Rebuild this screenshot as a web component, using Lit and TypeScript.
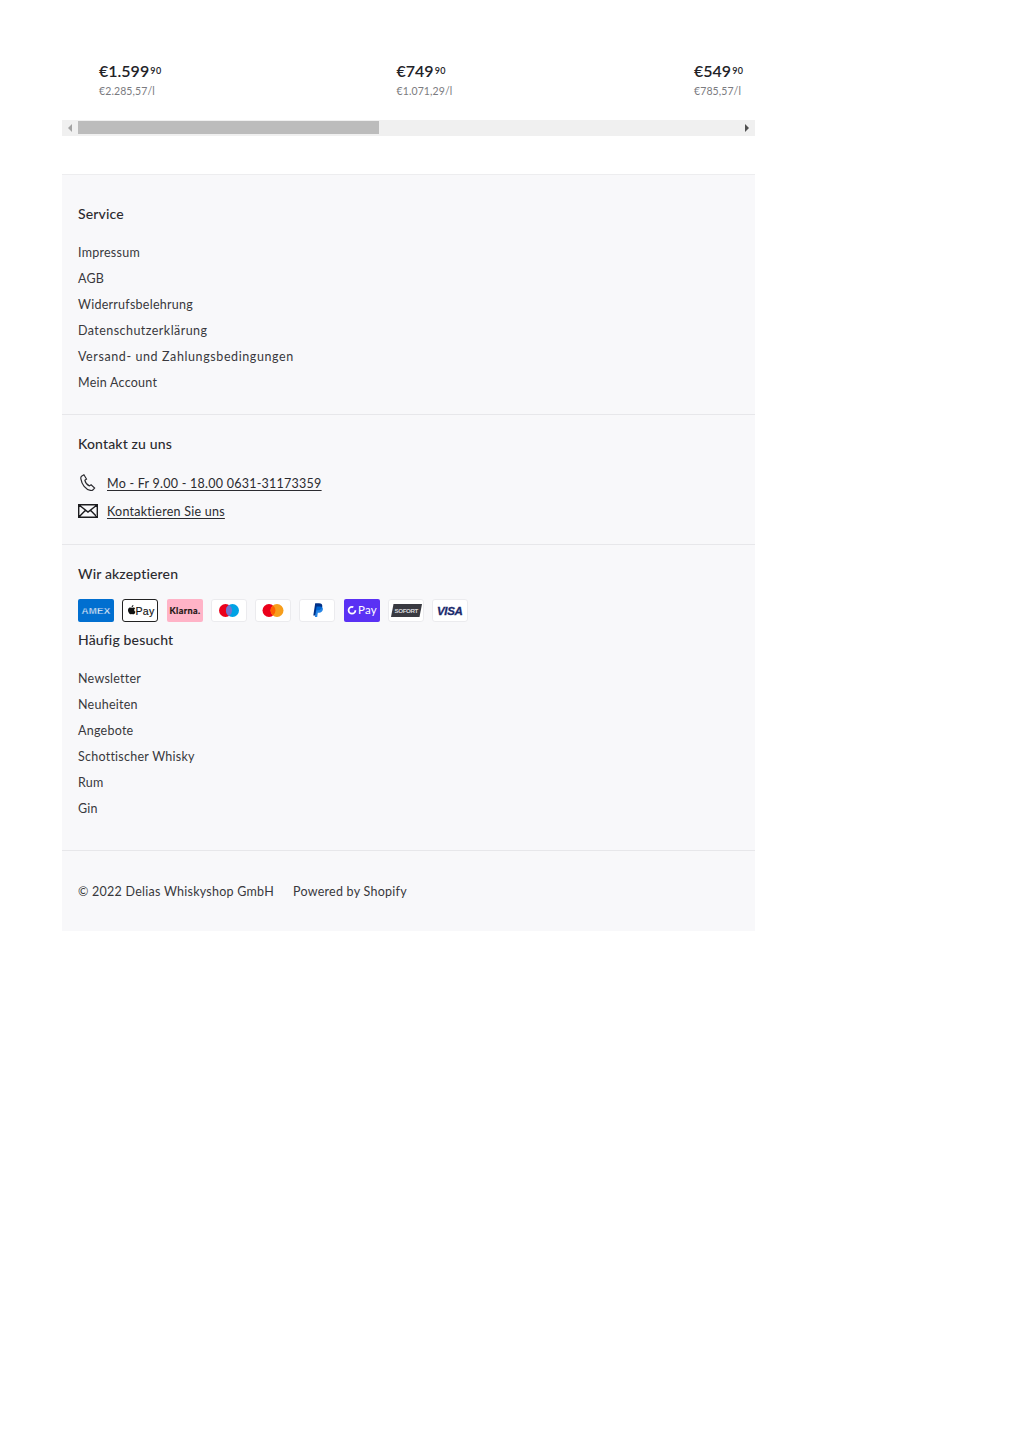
import { LitElement, html, css, svg } from "lit";
import { customElement } from "lit/decorators.js";

const products = [
  { euro: "€1.599", cents: "90", unit: "€2.285,57/l" },
  { euro: "€749", cents: "90", unit: "€1.071,29/l" },
  { euro: "€549", cents: "90", unit: "€785,57/l" },
];
const serviceLinks = [
  { label: "Impressum" },
  { label: "AGB" },
  { label: "Widerrufsbelehrung" },
  { label: "Datenschutzerklärung", spacing: 0.45 },
  { label: "Versand- und Zahlungsbedingungen", spacing: 0.6 },
  { label: "Mein Account" },
];
const visitedLinks = [
  { label: "Newsletter" },
  { label: "Neuheiten" },
  { label: "Angebote" },
  { label: "Schottischer Whisky" },
  { label: "Rum" },
  { label: "Gin" },
];

const cardBorder = svg`<rect x=".5" y=".5" width="35" height="22" rx="2.5" fill="#fff" stroke="#ebebee"/>`;

const payIcons = [
  svg`<rect width="36" height="23" rx="2" fill="#016fd0"/><text x="18" y="14.7" text-anchor="middle" font-family="Liberation Sans" font-size="9" font-weight="700" fill="#fff" stroke="#016fd0" stroke-width=".35" textLength="29" lengthAdjust="spacingAndGlyphs">AMEX</text>`,
  svg`<rect x=".5" y=".5" width="35" height="22" rx="2.5" fill="#fff" stroke="#222"/><g transform="translate(3.8 4.9) scale(.74)" fill="#111"><path d="M9.6 3.6c.5-.6.8-1.300.7-2-.7 0-1.400.4-1.800.9-.4.500-.8 1.200-.7 1.900.7.100 1.400-.3 1.800-.8zm.7 1.100c-1 0-1.800.6-2.300.6s-1.200-.6-2-.6c-1 0-2 .6-2.500 1.500-1.100 1.900-.3 4.700.8 6.200.5.800 1.100 1.600 2 1.600.8 0 1.100-.5 2-.5s1.200.5 2 .5 1.400-.8 1.900-1.500c.6-.9.800-1.700.9-1.800-1-.4-1.700-1.400-1.700-2.500 0-1 .6-1.900 1.400-2.300-.5-.8-1.400-1.200-2.500-1.200z"/></g><text x="13.500" y="15.600" font-family="Liberation Sans" font-size="11.200" fill="#111" stroke="#111" stroke-width=".15" textLength="19" lengthAdjust="spacingAndGlyphs">Pay</text>`,
  svg`<rect width="36" height="23" rx="2" fill="#ffb3c7"/><text x="18" y="14.600" text-anchor="middle" font-family="Lato" font-size="9" font-weight="700" fill="#17120f" stroke="#17120f" stroke-width=".2" textLength="31">Klarna.</text>`,
  svg`${cardBorder}<circle cx="14.500" cy="11.500" r="6.500" fill="#eb001b"/><circle cx="21.500" cy="11.500" r="6.500" fill="#00a2e5"/><path d="M18 6a6.500 6.500 0 0 1 0 11 6.500 6.500 0 0 1 0-11z" fill="#7375cf"/>`,
  svg`${cardBorder}<circle cx="14" cy="11.500" r="6.500" fill="#eb001b"/><circle cx="22" cy="11.500" r="6.500" fill="#f79e1b"/><path d="M18 6.400a6.500 6.500 0 0 1 0 10.200 6.500 6.500 0 0 1 0-10.200z" fill="#ff5f00"/>`,
  svg`${cardBorder}<path d="M14.300 16.500l1.900-12.300h3.800c2.300 0 3.600 1.200 3.300 3.300-.4 2.500-2.100 3.700-4.400 3.700h-1.500l-.8 5.300z" fill="#003087"/><path d="M15.900 18l1.700-10.500h3.300c2.200 0 3.300 1 3 3-.3 2-1.800 3.200-3.800 3.200h-1.300l-.6 4.300z" fill="#0070e0" opacity=".85"/>`,
  svg`<rect width="36" height="23" rx="2" fill="#5a31f4"/><circle cx="8" cy="11.300" r="3.400" fill="none" stroke="#fff" stroke-width="1.800" stroke-dasharray="17 4"/><text x="14" y="15.400" font-family="Lato" font-size="11.500" font-weight="400" fill="#fff">Pay</text>`,
  svg`${cardBorder}<path d="M5.500 5h28.500l-2.500 13h-28.500z" fill="#393a41"/><text x="18.500" y="13.700" text-anchor="middle" font-family="Liberation Sans" font-size="6.200" font-weight="700" fill="#d6d6da" textLength="24">SOFORT</text>`,
  svg`${cardBorder}<text x="18" y="15.700" text-anchor="middle" font-family="Liberation Sans" font-size="11.500" font-weight="700" font-style="italic" fill="#1a2a6c" stroke="#1a2a6c" stroke-width=".3" textLength="26">VISA</text>`,
];

@customElement("app-root")
export class AppRoot extends LitElement {
  static styles = css`
    :host { display: block; height: 1449px; background: #fff; font-family: "Lato", sans-serif; color: #2b2b30; }
    .wrap { width: 693px; margin-left: 62px; padding-top: 61.6px; }
    .products { display: grid; grid-template-columns: repeat(3, 297.5px); height: 58px; overflow: hidden; }
    .product { padding-left: 37px; }
    .price { font-size: 16px; font-weight: 600; line-height: 18px; letter-spacing: 0; color: #222227; white-space: nowrap; }
    .price sup { font-size: 9px; line-height: 0; letter-spacing: .5px; vertical-align: 3px; margin-left: 1px; }
    .unit { font-size: 10.5px; line-height: 14px; margin-top: 4px; letter-spacing: .1px; color: #7b7b80; }
    .scrollbar { display: flex; align-items: center; height: 16.4px; background: #f0f0f0; }
    .arrow { width: 16px; height: 16px; display: flex; align-items: center; justify-content: center; flex: none; }
    .thumb { width: 301px; height: 13px; background: #bcbcbc; }
    .spacer { flex: 1; }
    footer { margin-top: 38px; background: #f8f8fa; border-top: 1px solid #ededef; font-size: 12.5px; letter-spacing: .25px; color: #38383d; }
    section { padding: 0 16px; }
    section + section { border-top: 1px solid #e7e7ea; }
    h3 { margin: 0; font-size: 14px; line-height: 20px; font-weight: 500; letter-spacing: .15px; color: #2b2b30; }
    .service { padding-top: 29px; height: 239px; box-sizing: border-box; }
    .links { list-style: none; margin: 16px 0 0; padding: 0; }
    .links li { height: 26px; line-height: 26px; }
    .contact { padding-top: 19px; height: 130px; box-sizing: border-box; }
    .contact-rows { margin-top: 15px; }
    .contact-row { display: flex; align-items: center; height: 28px; }
    .contact-icon { width: 20px; height: 20px; margin-right: 9px; flex: none; }
    .contact-row a { padding-top: 2px; color: #2b2b30; text-decoration: underline; text-underline-offset: 2px; }
    .accept { padding-top: 19px; height: 306px; box-sizing: border-box; }
    .pay { display: flex; gap: 8.3px; margin-top: 15px; }
    .pay svg { width: 36px; height: 23px; display: block; flex: none; }
    .visited { margin-top: 8px; }
    .legal { display: flex; gap: 19px; align-items: center; height: 81px; padding-top: 1px; box-sizing: border-box; }
  `;

  private link(l: { label: string; spacing?: number }) {
    return html`<li style=${l.spacing ? `letter-spacing:${l.spacing}px` : ""}>${l.label}</li>`;
  }

  render() {
    return html`
      <div class="wrap">
        <div class="products">
          ${products.map((p) => html`
            <div class="product">
              <div class="price">${p.euro}<sup>${p.cents}</sup></div>
              <div class="unit">${p.unit}</div>
            </div>`)}
        </div>
        <div class="scrollbar">
          <div class="arrow"><svg width="6" height="8" viewBox="0 0 6 8"><path d="M5 0v8L1 4z" fill="#a3a3a3"/></svg></div>
          <div class="thumb"></div>
          <div class="spacer"></div>
          <div class="arrow"><svg width="6" height="8" viewBox="0 0 6 8"><path d="M1 0v8l4-4z" fill="#505050"/></svg></div>
        </div>
        <footer>
          <section class="service">
            <h3>Service</h3>
            <ul class="links">${serviceLinks.map((l) => this.link(l))}</ul>
          </section>
          <section class="contact">
            <h3>Kontakt zu uns</h3>
            <div class="contact-rows">
              <div class="contact-row">
                <svg class="contact-icon" viewBox="0 0 20 20" fill="none" stroke="#2b2b30" stroke-width="1.2"><path d="M3.500 3.200l2.400-1.400 2.600 4.200-1.600 1.300c.5 2.500 2.300 4.600 4.500 5.600l1.700-1.200 3.500 3.300-1.800 2c-.6.500-1.500.6-2.400.3C7.500 16.500 3.800 11.500 2.800 5.600c-.100-1 .100-1.900.7-2.400z"/></svg>
                <a>Mo - Fr 9.00 - 18.00 0631-31173359</a>
              </div>
              <div class="contact-row">
                <svg class="contact-icon" viewBox="0 0 20 20" fill="none" stroke="#1c1c1f" stroke-width="1.4"><path d="M.7 3.700h18.600v12.600H.7zM.7 3.700L10 11l9.300-7.300M.7 16.300L7.500 9.300M19.300 16.300l-6.800-7"/></svg>
                <a>Kontaktieren Sie uns</a>
              </div>
            </div>
          </section>
          <section class="accept">
            <h3>Wir akzeptieren</h3>
            <div class="pay">
              ${payIcons.map((icon) => html`<svg viewBox="0 0 36 23">${icon}</svg>`)}
            </div>
            <div class="visited">
              <h3>Häufig besucht</h3>
              <ul class="links">${visitedLinks.map((l) => this.link(l))}</ul>
            </div>
          </section>
          <section class="legal">
            <span>© 2022 Delias Whiskyshop GmbH</span>
            <span>Powered by Shopify</span>
          </section>
        </footer>
      </div>
    `;
  }
}

declare global {
  interface HTMLElementTagNameMap { "app-root": AppRoot; }
}
